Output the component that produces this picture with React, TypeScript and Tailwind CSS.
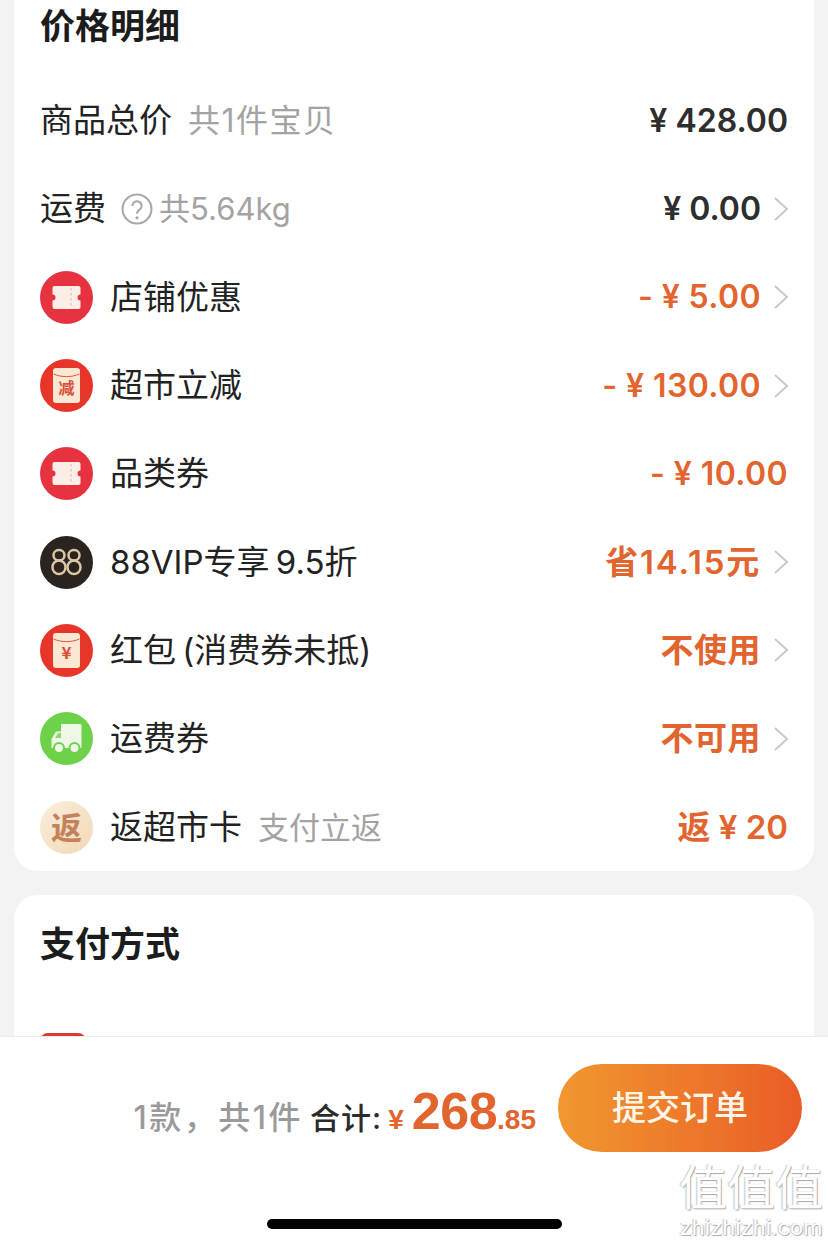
import React from "react";

const font = { fontFamily: '"Inter","Noto Sans CJK SC",sans-serif' };
const digits = { fontFamily: '"Liberation Sans",sans-serif' };

function Chevron() {
  return (
    <svg width="17" height="26" viewBox="0 0 17 26" fill="none" className="ml-[12px] mr-[-2px] shrink-0">
      <polyline points="2,2 14,13 2,24" stroke="#c9c9c9" strokeWidth="2" />
    </svg>
  );
}

function Ticket({ color }: { color: string }) {
  return (
    <svg width="53" height="53" viewBox="0 0 53 53">
      <circle cx="26.5" cy="26.5" r="26.5" fill={color} />
      <path d="M14.500 15h24a2 2 0 0 1 2 2v6.500a3 3 0 0 0 0 6V36a2 2 0 0 1-2 2h-24a2 2 0 0 1-2-2v-6.500a3 3 0 0 0 0-6V17a2 2 0 0 1 2-2z" fill="#fbeee6" />
      <line x1="31" y1="17" x2="31" y2="36" stroke="#e6c3ba" strokeWidth="1.500" strokeDasharray="2.500 2.500" />
    </svg>
  );
}

function Envelope({ label, size }: { label: string; size: number }) {
  return (
    <svg width="53" height="53" viewBox="0 0 53 53">
      <circle cx="26.5" cy="26.5" r="26.5" fill="#e8352a" />
      <rect x="13" y="9" width="27" height="35" rx="3" fill="#fbe7d2" />
      <path d="M13.500 15c8 3.500 18 3.500 26 0" fill="none" stroke="#e0533f" strokeWidth="1" />
      <text x="26.500" y="35" textAnchor="middle" fontSize={size} fontWeight="700" fill="#d9503c" fontFamily='"Noto Sans CJK SC",sans-serif'>
        {label}
      </text>
    </svg>
  );
}

function VipIcon() {
  return (
    <svg width="53" height="53" viewBox="0 0 53 53" fill="none">
      <circle cx="26.5" cy="26.5" r="26.5" fill="#2a2420" />
      <g stroke="#dcc7a4" strokeWidth="2.500">
        <rect x="13.500" y="14" width="11" height="10.500" rx="5.200" />
        <rect x="12.500" y="24.500" width="13" height="13.500" rx="6.500" />
        <rect x="28.500" y="14" width="11" height="10.500" rx="5.200" />
        <rect x="27.500" y="24.500" width="13" height="13.500" rx="6.500" />
      </g>
    </svg>
  );
}

function TruckIcon() {
  return (
    <svg width="53" height="53" viewBox="0 0 53 53">
      <circle cx="26.5" cy="26.5" r="26.5" fill="#6dd24a" />
      <path d="M21 12h19a1.500 1.500 0 0 1 1.500 1.500V36H11.500v-9l4.500-7.500h5z" fill="#eef8e6" />
      <path d="M15 26l3-5h3v5z" fill="#8fd870" />
      <circle cx="19" cy="36" r="5" fill="#eef8e6" stroke="#6dd24a" strokeWidth="2" />
      <circle cx="34.500" cy="36" r="5" fill="#eef8e6" stroke="#6dd24a" strokeWidth="2" />
    </svg>
  );
}

function FanIcon() {
  return (
    <div className="flex h-[53px] w-[53px] items-center justify-center rounded-full bg-gradient-to-br from-[#f9eedd] to-[#f3d8b4] text-[31px] font-bold leading-none text-[#c4815a]">
      返
    </div>
  );
}

function Row({
  icon,
  children,
  note,
  value,
  orange,
  chevron,
  valueClass = "text-[32px] font-semibold",
}: {
  icon?: React.ReactNode;
  children: React.ReactNode;
  note?: React.ReactNode;
  value: string;
  orange?: boolean;
  chevron?: boolean;
  valueClass?: string;
}) {
  return (
    <div className="flex h-[88.3px] items-center justify-between">
      <div className="flex items-center">
        {icon && <div className="mr-[17px] shrink-0">{icon}</div>}
        <span className="text-[33px] leading-none text-[#222] whitespace-nowrap [word-spacing:-3px]">{children}</span>
        {note}
      </div>
      <div className="flex items-center">
        <span className={`leading-none whitespace-nowrap ${valueClass} ${orange ? "text-[#e2642f]" : "text-[#2e2e2e]"}`}>{value}</span>
        {chevron && <Chevron />}
      </div>
    </div>
  );
}

export default function App() {
  return (
    <div className="flex h-[1244px] w-[828px] flex-col overflow-hidden bg-[#f3f3f3]" style={font}>
      <div className="h-[1036px] shrink-0 overflow-hidden px-[14px]">
        <div className="rounded-b-[24px] bg-white pl-[26px] pr-[26px]">
          <div className="mb-[24.500px] flex h-[52px] items-center text-[35px] font-bold leading-none text-[#1c1c1c]">价格明细</div>
          <Row note={<span className="ml-[16px] text-[32px] leading-none tracking-[1.500px] text-[#a3a3a3]">共1件宝贝</span>} value="¥ 428.00">商品总价</Row>
          <Row
            chevron
            value="¥ 0.00"
            note={
              <span className="ml-[15px] flex items-center text-[31px] leading-none text-[#a3a3a3]">
                <svg width="32" height="32" viewBox="0 0 31 31" fill="none" className="mr-[6px]">
                  <circle cx="15.500" cy="15.500" r="14" stroke="#a8a8a8" strokeWidth="2" />
                  <path d="M11 12.500a4.500 4.500 0 1 1 7 3.700c-1.600 1.100-2.500 1.900-2.500 3.800" stroke="#a8a8a8" strokeWidth="2" />
                  <circle cx="15.500" cy="24" r="1.500" fill="#a8a8a8" />
                </svg>
                共5.64kg
              </span>
            }
          >
            运费
          </Row>
          <Row icon={<Ticket color="#e7333f" />} orange chevron value="- ¥ 5.00" valueClass="text-[32px] font-semibold tracking-[0.400px]">店铺优惠</Row>
          <Row icon={<Envelope label="减" size={16} />} orange chevron value="- ¥ 130.00" valueClass="text-[32px] font-semibold tracking-[0.400px]">超市立减</Row>
          <Row icon={<Ticket color="#e7333f" />} orange value="- ¥ 10.00" valueClass="text-[32px] font-semibold tracking-[0.400px]">品类券</Row>
          <Row icon={<VipIcon />} orange chevron value="省14.15元" valueClass="text-[33px] font-semibold tracking-[1.800px]">88VIP专享 9.5折</Row>
          <Row icon={<Envelope label="¥" size={17} />} orange chevron value="不使用" valueClass="text-[33px] font-semibold tracking-[0.500px]">红包 (消费券未抵)</Row>
          <Row icon={<TruckIcon />} orange chevron value="不可用" valueClass="text-[33px] font-semibold tracking-[0.500px]">运费券</Row>
          <Row
            icon={<FanIcon />}
            orange
            value="返 ¥ 20"
            valueClass="text-[33px] font-semibold"
            note={<span className="ml-[16px] text-[31px] leading-none text-[#a3a3a3]">支付立返</span>}
          >
            返超市卡
          </Row>
        </div>
        <div className="mt-[24px] rounded-t-[24px] bg-white px-[26px]">
          <div className="flex h-[98px] items-center text-[35px] font-bold leading-none text-[#1c1c1c]">支付方式</div>
          <div className="mt-[40px] flex items-center justify-between">
            <div className="h-[46px] w-[46px] rounded-[8px] bg-[#d93a32]" />
            <div className="mr-[4px] h-[36px] w-[36px] rounded-full border-2 border-[#d8d8d8]" />
          </div>
        </div>
      </div>
      <div className="relative flex flex-1 flex-col border-t border-[#ececec] bg-white">
        <div className="mt-[27px] flex h-[88px] items-center justify-end pr-[26px]">
          <span className="mt-[6px] flex items-baseline whitespace-nowrap leading-none">
            <span className="text-[32px] font-medium tracking-[2.500px] text-[#9a9a9a]">1款，共1件</span>
            <span className="ml-[7px] text-[30px] font-medium tracking-[1px] text-[#2b2b2b]">合计:</span>
            <span className="ml-[6px] text-[28px] font-bold text-[#e2642f]" style={digits}>¥</span>
            <span className="ml-[8px] text-[52px] font-bold tracking-[-0.500px] text-[#e2642f]" style={digits}>268</span>
            <span className="text-[28px] font-bold text-[#e2642f]" style={digits}>.85</span>
          </span>
          <div className="ml-[22px] flex h-[88px] w-[244px] shrink-0 items-center justify-center rounded-full bg-gradient-to-r from-[#f0972f] to-[#e95c27] text-[34px] font-medium leading-none text-[#fff6ea]">
            提交订单
          </div>
        </div>
        <div className="ml-[267px] mt-[67px] h-[10px] w-[295px] rounded-full bg-black" />
        <div className="absolute left-[678px] top-[127px] flex w-[146px] flex-col items-center leading-none text-white [text-shadow:1px_1px_1px_#a8a8a8,-1px_0_1px_#c4c4c4]">
          <span className="text-[48px]">值值值</span>
          <span className="mt-[4px] text-[22px]">zhizhizhi.com</span>
        </div>
      </div>
    </div>
  );
}
